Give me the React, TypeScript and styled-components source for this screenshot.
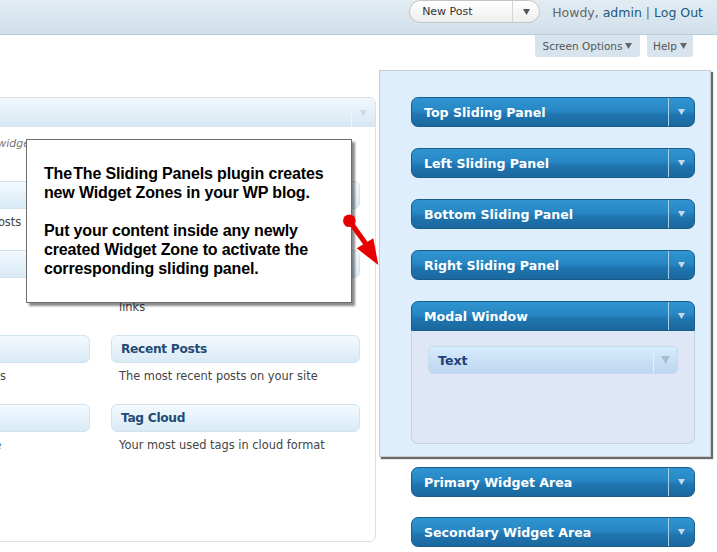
import React from "react";
import styled, { createGlobalStyle } from "styled-components";

const GlobalStyle = createGlobalStyle`
  html, body { margin: 0; padding: 0; background: #fff; }
  body { font-family: "DejaVu Sans", Verdana, sans-serif; overflow: hidden; }
  * { box-sizing: border-box; }
`;

const Page = styled.div`
  position: relative;
  width: 717px;
  height: 552px;
  overflow: hidden;
  background: #fff;
`;

const TopBar = styled.header`
  height: 35px;
  border-bottom: 1px solid #b9cbd8;
  background: linear-gradient(to bottom, #e2ecf3, #d0e0ea);
  display: flex;
  justify-content: flex-end;
  align-items: flex-start;
  gap: 12px;
  padding-right: 14px;
`;

const FavButton = styled.div`
  width: 131px;
  height: 23px;
  border: 1px solid #c4c4c4;
  border-radius: 12px;
  background: linear-gradient(to bottom, #ffffff, #eeeeee);
  display: flex;
  align-items: center;
  font-size: 11px;
  color: #333;
  overflow: hidden;
`;

const FavLabel = styled.span`
  flex: 1;
  padding-left: 12px;
`;

const FavToggle = styled.span`
  width: 27px;
  height: 100%;
  border-left: 1px solid #d6d6d6;
  display: flex;
  align-items: center;
  justify-content: center;
`;

const Howdy = styled.div`
  line-height: 25px;
  font-size: 12.5px;
  color: #666;
`;

const HeadLink = styled.a`
  color: #21577f;
  text-decoration: none;
`;

const TabRow = styled.div`
  height: 22px;
  display: flex;
  justify-content: flex-end;
  gap: 7px;
  padding-right: 24px;
`;

const MetaTab = styled.div<{ $w: number }>`
  width: ${(p) => p.$w}px;
  height: 22px;
  background: #d7e4ed;
  border-radius: 0 0 3px 3px;
  display: flex;
  align-items: center;
  justify-content: center;
  gap: 3px;
  font-size: 10.5px;
  color: #555;
`;

const Main = styled.div`
  display: flex;
  align-items: flex-start;
`;

const WidgetsPanel = styled.section`
  flex: none;
  margin-left: -177px;
  margin-top: 40px;
  width: 553px;
  height: 445px;
  border: 1px solid #dfdfdf;
  border-radius: 6px;
  overflow: hidden;
`;

const PanelHead = styled.div`
  height: 29px;
  background: linear-gradient(to bottom, #f0f8fd, #d6e7f2);
  display: flex;
  justify-content: flex-end;
`;

const PanelToggle = styled.div`
  width: 24px;
  border-left: 1px solid #eef5fa;
  display: flex;
  align-items: center;
  justify-content: center;
`;

const PanelIntro = styled.p`
  margin: 9px 0 0 143px;
  font-size: 11px;
  line-height: 16px;
  font-style: italic;
  color: #777;
  white-space: nowrap;
`;

const WidgetGrid = styled.div`
  display: grid;
  grid-template-columns: 249px 249px;
  column-gap: 21px;
  align-items: start;
  margin-top: 29px;
  padding: 0 17px;
`;

const Widget = styled.div``;

const WidgetBar = styled.div`
  height: 28px;
  border: 1px solid #d3e3ee;
  border-radius: 6px;
  background: linear-gradient(to bottom, #f3faff, #d9eaf5);
  display: flex;
  align-items: center;
  padding-left: 9px;
  font-weight: bold;
  font-size: 12.2px;
  letter-spacing: -0.3px;
  color: #1f4b74;
`;

const WidgetDesc = styled.p`
  margin: 5px 8px 20px;
  font-size: 11.4px;
  line-height: 16px;
  color: #444;
`;

const SideColumn = styled.div`
  flex: none;
  margin-left: 3px;
  margin-top: 13px;
  width: 332px;
`;

const Highlight = styled.div`
  background: #dfeefd;
  border: 1px solid #c4ccd4;
  box-shadow: 2px 2px 1px #6b6b6b;
  padding: 26px 15px 12px 31px;
  display: flex;
  flex-direction: column;
  gap: 21px;
`;

const PlainList = styled.div`
  margin-top: 10px;
  padding-left: 32px;
  display: flex;
  flex-direction: column;
  gap: 20px;
`;

const Sidebar = styled.div`
  width: 284px;
`;

const SidebarBar = styled.div<{ $open?: boolean }>`
  height: 30px;
  border: 1px solid #1a5c8a;
  border-radius: ${(p) => (p.$open ? "7px 7px 0 0" : "7px")};
  background: linear-gradient(to bottom, #2f95d0 0%, #2787c4 45%, #1f75b0 60%, #1b679e 100%);
  display: flex;
  align-items: center;
  color: #fff;
  font-weight: bold;
  font-size: 12.6px;
`;

const SidebarTitle = styled.span`
  flex: 1;
  padding-left: 12px;
`;

const SidebarToggle = styled.span`
  width: 26px;
  height: 100%;
  border-left: 1px solid #a9cfe9;
  display: flex;
  align-items: center;
  justify-content: center;
`;

const SidebarBody = styled.div`
  height: 113px;
  background: #dfe7f6;
  border: 1px solid #bcd3ea;
  border-top: none;
  border-radius: 0 0 7px 7px;
  padding: 15px 16px;
`;

const InnerWidget = styled.div`
  height: 28px;
  border: 1px solid #c6daee;
  border-radius: 5px;
  background: linear-gradient(to bottom, #d6ecfd, #bdd6ef);
  display: flex;
  align-items: center;
  color: #22407a;
  font-weight: bold;
  font-size: 12.6px;
`;

const InnerTitle = styled.span`
  flex: 1;
  padding-left: 9px;
`;

const InnerToggle = styled.span`
  width: 24px;
  height: 100%;
  border-left: 1px solid #e3f0fb;
  display: flex;
  align-items: center;
  justify-content: center;
`;

const Callout = styled.div`
  position: absolute;
  left: 26px;
  top: 139px;
  width: 326px;
  height: 164px;
  background: #fff;
  border: 1px solid #6e6e6e;
  box-shadow: 3px 3px 2px rgba(0, 0, 0, 0.45);
  padding: 24px 10px 0 17px;
  font-family: "Liberation Sans", Arial, sans-serif;
  font-weight: bold;
  font-size: 16px;
  line-height: 19px;
  letter-spacing: -0.15px;
  color: #000;
`;

const CalloutPara = styled.p`
  margin: 0 0 19px;
`;

const Pointer = styled.svg`
  position: absolute;
  left: 340px;
  top: 210px;
`;

const Tri = ({ color, w = 7, h = 6 }: { color: string; w?: number; h?: number }) => (
  <svg width={w} height={h} viewBox={`0 0 ${w} ${h}`}>
    <polygon points={`0,0 ${w},0 ${w / 2},${h}`} fill={color} />
  </svg>
);

type Item = { title: string; desc: string };

const widgets: Item[] = [
  { title: "Calendar", desc: "A calendar of your site's posts" },
  { title: "Categories", desc: "A list or dropdown of categories" },
  { title: "Links", desc: "Your blogroll" },
  { title: "Meta", desc: "Log in/out, admin, feed and WordPress links" },
  { title: "Recent Comments", desc: "The most recent comments" },
  { title: "Recent Posts", desc: "The most recent posts on your site" },
  { title: "Search", desc: "A search form for your site" },
  { title: "Tag Cloud", desc: "Your most used tags in cloud format" },
];

const boxed = ["Top Sliding Panel", "Left Sliding Panel", "Bottom Sliding Panel", "Right Sliding Panel"];

const SidebarHead = ({ title, open }: { title: string; open?: boolean }) => (
  <SidebarBar $open={open}>
    <SidebarTitle>{title}</SidebarTitle>
    <SidebarToggle>
      <Tri color="#c6d9e8" />
    </SidebarToggle>
  </SidebarBar>
);

export default function App() {
  return (
    <Page>
      <GlobalStyle />
      <TopBar>
        <FavButton>
          <FavLabel>New Post</FavLabel>
          <FavToggle>
            <Tri color="#555" />
          </FavToggle>
        </FavButton>
        <Howdy>
          Howdy, <HeadLink href="#">admin</HeadLink> | <HeadLink href="#">Log Out</HeadLink>
        </Howdy>
      </TopBar>
      <TabRow>
        <MetaTab $w={105}>
          Screen Options <Tri color="#666" w={7} h={6} />
        </MetaTab>
        <MetaTab $w={46}>
          Help <Tri color="#666" w={7} h={6} />
        </MetaTab>
      </TabRow>
      <Main>
        <WidgetsPanel>
          <PanelHead>
            <PanelToggle>
              <Tri color="#c9dbe8" />
            </PanelToggle>
          </PanelHead>
          <PanelIntro>
            Drag widgets from here to a sidebar on the right to activate them.
          </PanelIntro>
          <WidgetGrid>
            {widgets.map((w) => (
              <Widget key={w.title}>
                <WidgetBar>{w.title}</WidgetBar>
                <WidgetDesc>{w.desc}</WidgetDesc>
              </Widget>
            ))}
          </WidgetGrid>
        </WidgetsPanel>
        <SideColumn>
          <Highlight>
            {boxed.map((t) => (
              <Sidebar key={t}>
                <SidebarHead title={t} />
              </Sidebar>
            ))}
            <Sidebar>
              <SidebarHead title="Modal Window" open />
              <SidebarBody>
                <InnerWidget>
                  <InnerTitle>Text</InnerTitle>
                  <InnerToggle>
                    <Tri color="#a8bdd2" w={9} h={8} />
                  </InnerToggle>
                </InnerWidget>
              </SidebarBody>
            </Sidebar>
          </Highlight>
          <PlainList>
            <Sidebar>
              <SidebarHead title="Primary Widget Area" />
            </Sidebar>
            <Sidebar>
              <SidebarHead title="Secondary Widget Area" />
            </Sidebar>
          </PlainList>
        </SideColumn>
      </Main>
      <Callout>
        <CalloutPara>
          The&#8202;The Sliding Panels plugin creates new Widget Zones in your WP blog.
        </CalloutPara>
        <CalloutPara>
          Put your content inside any newly created Widget Zone to activate the corresponding
          sliding panel.
        </CalloutPara>
      </Callout>
      <Pointer width="46" height="60" viewBox="0 0 46 60">
        <line x1="9.3" y1="10.7" x2="26" y2="34" stroke="#e80000" strokeWidth="5" />
        <circle cx="9.3" cy="10.7" r="6.3" fill="#e80000" />
        <polygon points="16.7,38.3 33.3,28.3 38.3,55" fill="#e80000" />
      </Pointer>
    </Page>
  );
}
